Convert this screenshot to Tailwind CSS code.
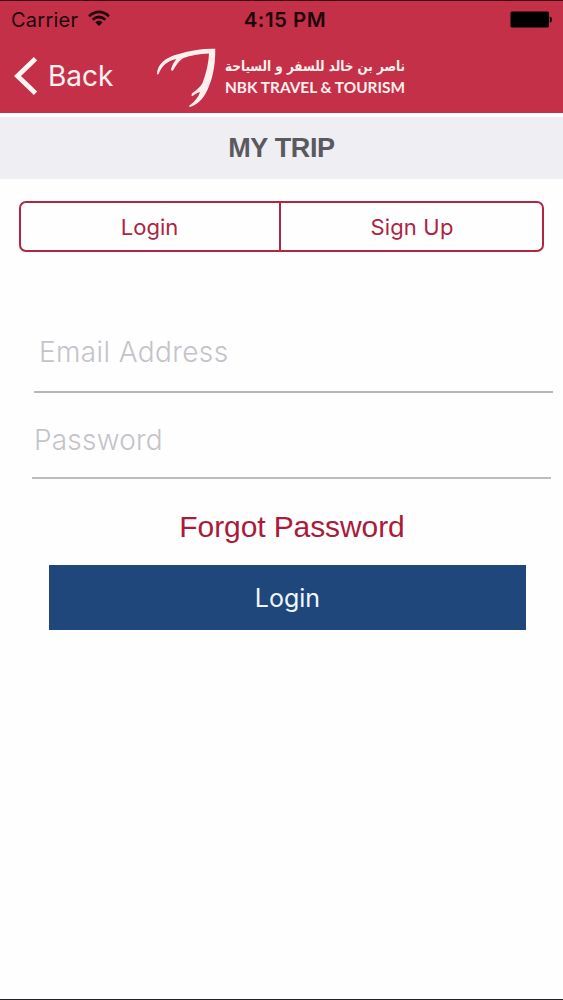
<!DOCTYPE html>
<html lang="en">
<head>
<meta charset="utf-8">
<title>My Trip</title>
<script src="https://cdn.jsdelivr.net/npm/@tailwindcss/browser@4"></script>
</head>
<body class="bg-[#fefefe]">
<div class="flex h-[1000px] w-[563px] flex-col overflow-hidden border-b border-[#222226] font-['Inter',sans-serif]">
  <header class="h-[113px] shrink-0 border-t border-[#3a0610] bg-[#c53049]">
    <div class="grid h-[37px] grid-cols-3 items-center pl-[11px] pr-[11px] text-[#200409]">
      <div class="flex items-center gap-2.5">
        <span class="text-[20px] leading-6 tracking-[0.25px]">Carrier</span>
        <svg class="mb-0.5 h-[17px] w-[22px]" viewBox="0 0 22 17" fill="none" stroke="currentColor" stroke-width="2.7">
          <path d="M1 6.2Q11-2.3 21 6.2M4.6 9.8Q11 4.2 17.4 9.8"/>
          <path d="M7.3 12.2Q11 9 14.7 12.2L11 16Z" fill="currentColor" stroke="none"/>
        </svg>
      </div>
      <span class="pl-[7px] text-center text-[20.5px] font-semibold leading-6 tracking-[0.5px]">4:15 PM</span>
      <svg class="h-[17px] w-[43px] justify-self-end" viewBox="0 0 43 17" fill="#000"><rect x="1.5" y="0.5" width="38.5" height="16" rx="1.5"/><path d="M40.8 5.5Q43 6 43 8.5T40.8 11.5Z"/></svg>
    </div>
    <div class="flex h-[75px] items-center">
      <svg class="ml-[14px] h-[38px] w-6" viewBox="0 0 24 38" fill="none" stroke="#fff5f4" stroke-width="4.8"><path d="M21.5 1.8L3.5 19L21.5 36.2"/></svg>
      <span class="ml-[10px] w-[68px] whitespace-nowrap text-[28px] leading-8 text-[#fff0f1]">Back</span>
      <svg class="ml-[38px] h-[64px] w-[260px] overflow-visible" viewBox="154 43 260 64" fill="#fff0ee">
        <path d="M157 73C157 64 165 56 179 53C190 49.5 203 47.4 215.2 47.8C215.6 60 213.5 75 209 85C205 96 199 103 190 106C188.8 105.6 189 104.6 190 104C195 100.5 198.5 96 200 91C197 91.5 194.5 94 192.2 95.2C191 94.5 191.5 93 192.5 92C196 89.5 200 86.5 202.3 82.5C205.5 74 208.4 64 209 52.4C199 52.7 190 54.5 183.5 57C179 59.5 175.5 65 173 69.5C171.5 70 170.7 69 171.3 67.2C172.3 64 174 61 176.5 58C168 59.5 162 64.5 158.8 72.5C158.2 73.6 157.3 73.8 157 73Z"/>
        <text x="405" y="69.5" direction="rtl" textLength="180" lengthAdjust="spacingAndGlyphs" font-family="DejaVu Sans, sans-serif" font-size="14" font-weight="700">ناصر بن خالد للسفر و السياحة</text>
        <text x="225" y="92" textLength="180" lengthAdjust="spacingAndGlyphs" font-family="Lato, sans-serif" font-size="15" font-weight="700">NBK TRAVEL &amp; TOURISM</text>
      </svg>
    </div>
  </header>
  <h1 class="mt-1 flex h-[62px] shrink-0 items-center justify-center bg-[#efeef3] font-['Liberation_Sans',sans-serif] text-[27px] font-bold leading-8 tracking-[-0.35px] text-[#59595f]">MY TRIP</h1>
  <div class="ml-[19px] mt-[22px] grid h-[51px] w-[525px] shrink-0 grid-cols-[260px_1fr] rounded-[7px] border-2 border-[#b02643] text-center text-[22px] leading-[49px] text-[#ad2342]">
    <button class="h-[47px] border-r-2 border-[#b02643] pr-px">Login</button>
    <button class="h-[47px] pl-px tracking-[0.15px]">Sign Up</button>
  </div>
  <form class="flex flex-col">
    <div class="ml-[34px] mt-[61px] h-[80px] w-[519px] border-b-2 border-[#b7b7b9] pl-[5px] pt-[22px] text-[28px] font-light leading-[34px] tracking-[0.38px] text-[#c5c3c9]">Email Address</div>
    <div class="ml-[32px] h-[86px] w-[519px] border-b-2 border-[#bdbdbf] pl-[2px] pt-[30px] text-[28px] font-light leading-[34px] tracking-[0.2px] text-[#c5c3c9]">Password</div>
    <a class="mt-[31px] pl-[21px] text-center font-['Liberation_Sans',sans-serif] text-[30px] leading-[34px] tracking-[-0.1px] text-[#aa1b3b]">Forgot Password</a>
    <button class="ml-[49px] mt-[21px] h-[65px] w-[477px] bg-[#1f477b] text-[25px] font-normal leading-[66px] text-[#f0f6ff]">Login</button>
  </form>
</div>
</body>
</html>
